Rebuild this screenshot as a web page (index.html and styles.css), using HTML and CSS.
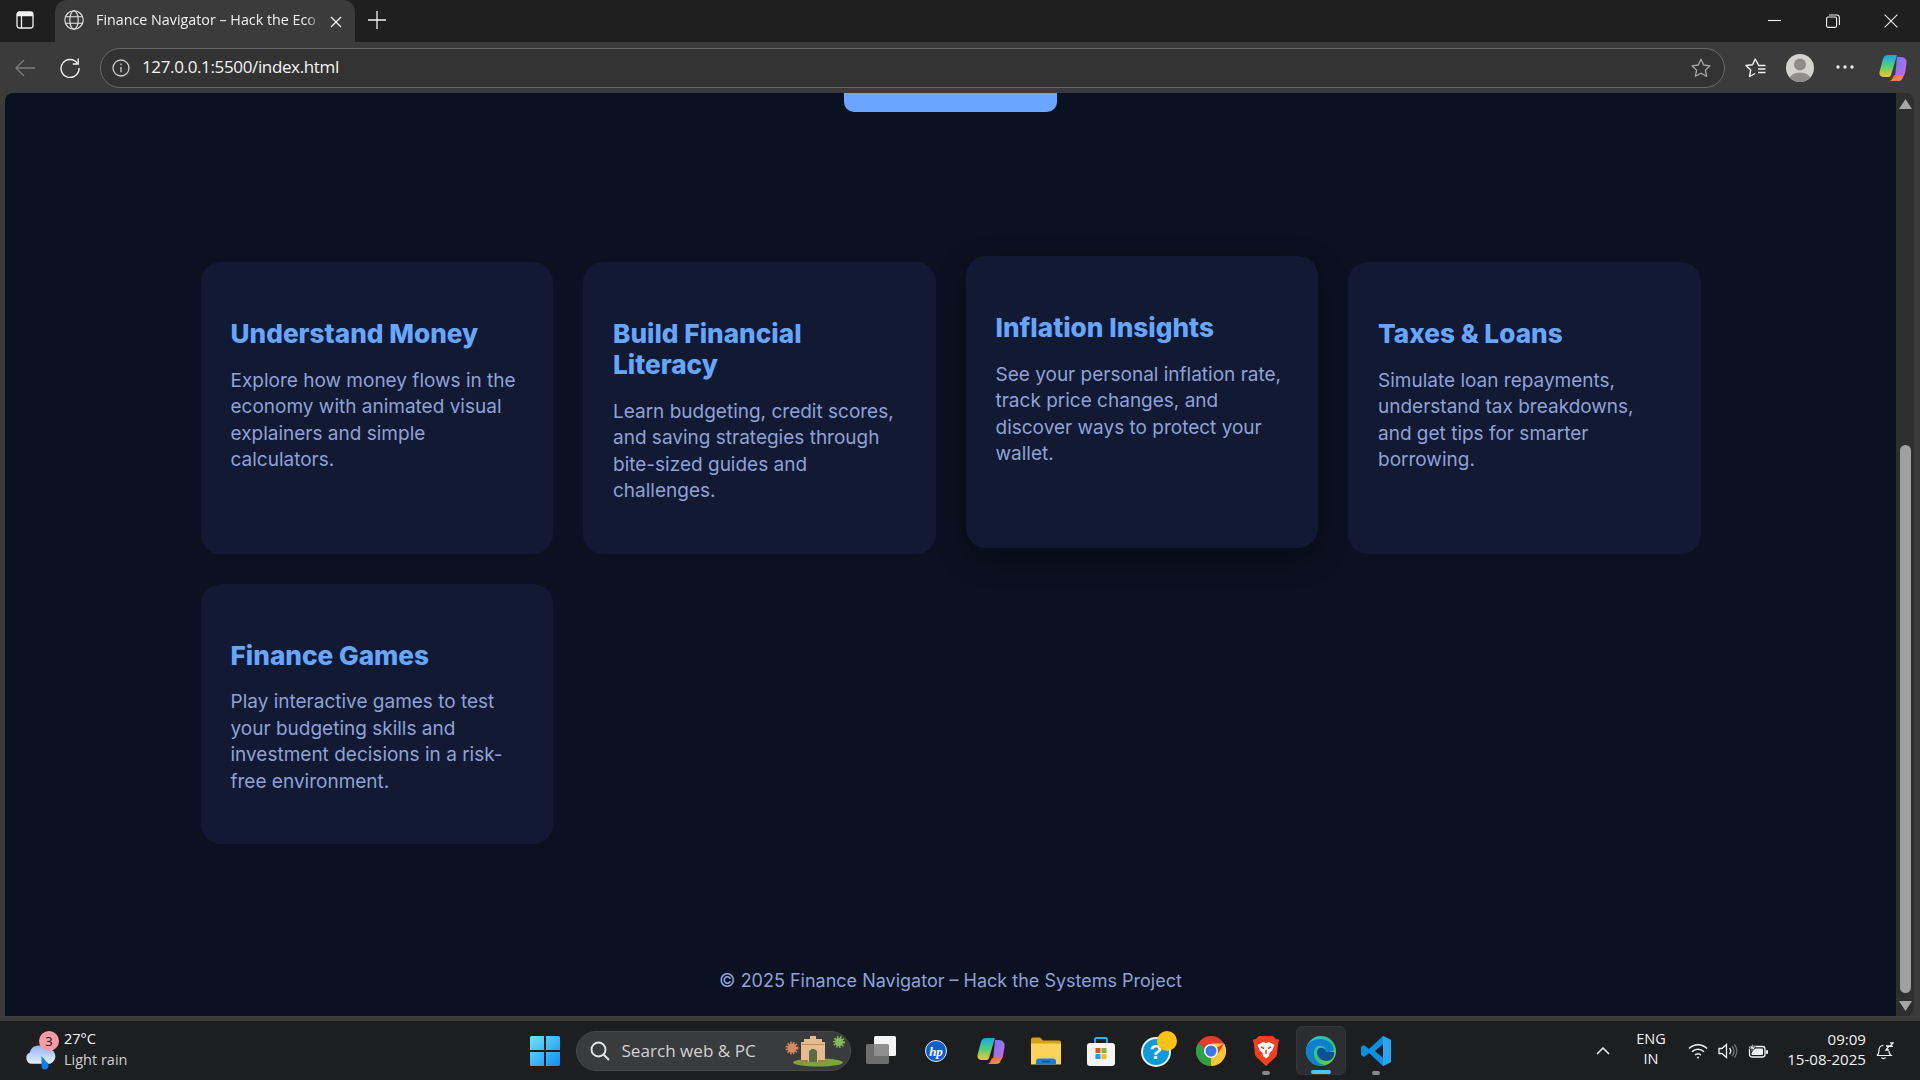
FILE: index.html
```html
<!DOCTYPE html>
<html lang="en">
<head>
<meta charset="utf-8">
<title>Finance Navigator – Hack the Economy</title>
<link rel="stylesheet" href="styles.css">
</head>
<body>
<div class="window">
  <header class="tabbar">
    <svg class="ic-side" viewBox="0 0 18 18" fill="none"><rect x="1" y="1" width="16" height="16" rx="2.5" stroke="#f2f2f2" stroke-width="1.3"/><path d="M1 5.2h16V3a2 2 0 0 0-2-2H3a2 2 0 0 0-2 2z" fill="#f2f2f2"/><path d="M5.5 5v12" stroke="#f2f2f2" stroke-width="1.3"/></svg>
    <div class="tab">
      <svg class="ic-globe" viewBox="0 0 20 20" fill="none" stroke="#e8e8e8" stroke-width="1.1"><circle cx="10" cy="10" r="9.2"/><ellipse cx="10" cy="10" rx="4.2" ry="9.2"/><path d="M1.5 6.7h17M1.5 13.3h17"/></svg>
      <span class="tab-title">Finance Navigator – Hack the Eco</span>
      <svg class="ic-x" viewBox="0 0 12 12" fill="none" stroke="#f2f2f2" stroke-width="1.4"><path d="M1 1l10 10M11 1L1 11"/></svg>
    </div>
    <svg class="ic-plus" viewBox="0 0 18 18" fill="none" stroke="#f2f2f2" stroke-width="1.3"><path d="M9 0v18M0 9h18"/></svg>
    <div class="winctl">
      <svg viewBox="0 0 14 14" fill="none" stroke="#f2f2f2" stroke-width="1.1"><path d="M0 6.5h13"/></svg>
      <svg viewBox="0 0 14 14" fill="none" stroke="#f2f2f2" stroke-width="1.1"><rect x=".6" y="3" width="10" height="10.4" rx="1.6"/><path d="M3 1h8a2.400 2.400 0 0 1 2.400 2.400V11"/></svg>
      <svg viewBox="0 0 14 14" fill="none" stroke="#f2f2f2" stroke-width="1.1"><path d="M.6.6l12.800 12.800M13.400.6L.6 13.400"/></svg>
    </div>
  </header>

  <nav class="toolbar">
    <svg class="ic-back" viewBox="0 0 20 18" fill="none" stroke="#7d7d7d" stroke-width="1.3"><path d="M20 9H1M9 1L1 9l8 8"/></svg>
    <svg class="ic-reload" viewBox="0 0 20 20" fill="none" stroke="#f2f2f2" stroke-width="1.4"><path d="M17.500 5.500A9 9 0 1 0 19 10"/><path d="M18.200 .6v5.400h-5.400"/></svg>
    <div class="address">
      <svg class="ic-info" viewBox="0 0 18 18" fill="none" stroke="#cfcfcf" stroke-width="1.3"><circle cx="9" cy="9" r="8"/><path d="M9 8v5.200M9 4.600v1.600"/></svg>
      <span class="url">127.0.0.1:5500/index.html</span>
      <svg class="ic-star" viewBox="0 0 20 20" fill="none" stroke="#a8a8a8" stroke-width="1.3" stroke-linejoin="round"><path d="M10 1.300l2.700 5.700 6.300.8-4.600 4.300 1.200 6.200L10 15.200l-5.600 3.100 1.200-6.200L1 7.800l6.300-.8z"/></svg>
    </div>
    <svg class="ic-fav" viewBox="0 0 21 20" fill="none" stroke="#f2f2f2" stroke-width="1.4" stroke-linejoin="round"><path d="M13.500 7L10.200 1 7.500 6.700 1 7.500l4.700 4.400-1.200 6.600 5.700-3"/><path d="M13 7.500h7.500M13 11h7.500M13 14.500h7.500"/></svg>
    <svg class="ic-profile" viewBox="0 0 28 28"><defs><clipPath id="pc"><circle cx="14" cy="14" r="14"/></clipPath></defs><circle cx="14" cy="14" r="14" fill="#d4d3cf"/><g clip-path="url(#pc)" fill="#8f8d89"><circle cx="14" cy="10.500" r="6"/><ellipse cx="14" cy="26" rx="11" ry="7.500"/></g></svg>
    <svg class="ic-dots" viewBox="0 0 18 4" fill="#ececec"><circle cx="2" cy="2" r="1.700"/><circle cx="9" cy="2" r="1.700"/><circle cx="16" cy="2" r="1.700"/></svg>
    <svg class="ic-copilot" viewBox="0 0 28 28"><defs><linearGradient id="cpa" x1="0" y1="0" x2="0" y2="1"><stop offset="0" stop-color="#1aa3f0"/><stop offset=".5" stop-color="#4fd07a"/><stop offset="1" stop-color="#f4c430"/></linearGradient><linearGradient id="cpb" x1="0" y1="0" x2="1" y2="1"><stop offset="0" stop-color="#6a7cf0"/><stop offset="1" stop-color="#d266e0"/></linearGradient><linearGradient id="cpc" x1="0" y1="0" x2="1" y2="1"><stop offset="0" stop-color="#f0592e"/><stop offset="1" stop-color="#f79a6a"/></linearGradient></defs><path d="M9 1h9l-6 20c-.5 1.500-1.500 2-3 2H5c-3 0-5-2-4.500-5L4 5C4.700 2.500 6.500 1 9 1z" fill="url(#cpa)"/><path d="M18 3h4c4 0 6 3 5.500 6.500L26 19c-.5 2.500-2 4-4.500 4H16z" fill="url(#cpb)"/><path d="M10 27h9c2.500 0 4-1 4.500-3L25 21H15l-2 4c-.5 1-1.500 2-3 2z" fill="url(#cpc)"/></svg>
  </nav>

  <div class="content-row">
    <main class="page">
      <div class="cta"></div>
      <section class="grid">
        <article class="card">
          <h3>Understand Money</h3>
          <p>Explore how money flows in the economy with animated visual explainers and simple calculators.</p>
        </article>
        <article class="card">
          <h3>Build Financial Literacy</h3>
          <p>Learn budgeting, credit scores, and saving strategies through bite-sized guides and challenges.</p>
        </article>
        <article class="card card-raised">
          <h3>Inflation Insights</h3>
          <p>See your personal inflation rate, track price changes, and discover ways to protect your wallet.</p>
        </article>
        <article class="card">
          <h3>Taxes &amp; Loans</h3>
          <p>Simulate loan repayments, understand tax breakdowns, and get tips for smarter borrowing.</p>
        </article>
        <article class="card">
          <h3>Finance Games</h3>
          <p>Play interactive games to test your budgeting skills and investment decisions in a risk-free environment.</p>
        </article>
      </section>
      <footer class="foot">© 2025 Finance Navigator – Hack the Systems Project</footer>
    </main>
    <aside class="scrollbar">
      <svg class="arrow" viewBox="0 0 13 10" fill="#a6a6a6"><path d="M6.500 0L13 10H0z"/></svg>
      <div class="thumb"></div>
      <svg class="arrow" viewBox="0 0 13 10" fill="#a6a6a6"><path d="M0 0h13L6.500 10z"/></svg>
    </aside>
  </div>

  <footer class="taskbar">
    <div class="weather">
      <div class="weather-icon">
        <svg viewBox="0 0 32 28"><defs><linearGradient id="cl" x1="0" y1="0" x2="0" y2="1"><stop offset="0" stop-color="#8fb4ef"/><stop offset="1" stop-color="#e6efff"/></linearGradient></defs><path d="M7 24a6 6 0 0 1-2-11.500A9 9 0 0 1 21 9a7.500 7.500 0 0 1 5 15z" fill="url(#cl)"/><path d="M17 16l7 8c1 4-1 6-3.500 6S17 28 17 25z" fill="#0f7ff0"/></svg>
        <span class="badge">3</span>
      </div>
      <div class="weather-text"><span class="temp">27°C</span><span class="cond">Light rain</span></div>
    </div>

    <div class="apps">
      <div class="cell">
        <svg class="i30" viewBox="0 0 30 30"><defs><linearGradient id="win" x1="0" y1="0" x2="1" y2="1"><stop offset="0" stop-color="#6fe3fb"/><stop offset="1" stop-color="#0f8cf5"/></linearGradient></defs><path d="M0 1.500A1.500 1.500 0 0 1 1.500 0H14v14H0zM16 0h12.500A1.500 1.500 0 0 1 30 1.500V14H16zM0 16h14v14H1.500A1.500 1.500 0 0 1 0 28.500zM16 16h14v12.500a1.500 1.500 0 0 1-1.500 1.500H16z" fill="url(#win)"/></svg>
      </div>
      <div class="search">
        <svg class="ic-search" viewBox="0 0 20 20" fill="none" stroke="#e4e4e4" stroke-width="1.900"><circle cx="8.500" cy="8.500" r="7"/><path d="M13.500 13.500l5.500 5.500"/></svg>
        <span class="search-text">Search web &amp; PC</span>
        <svg class="ic-gate" viewBox="0 0 60 32"><ellipse cx="33" cy="27.500" rx="25" ry="4" fill="#7aa53a"/><circle cx="7" cy="13" r="4.500" fill="#d98a60" stroke="#d98a60" stroke-width="4" stroke-dasharray="1.200 1.200"/><circle cx="54" cy="7" r="4" fill="#86bb52" stroke="#86bb52" stroke-width="4" stroke-dasharray="1.200 1.200"/><path d="M16 7h3V4h6V1h6v3h6v3h3v20H32v-9c0-5-8-5-8 0v9H16z" fill="#e4bc8f"/><path d="M17 9.500h22" stroke="#b98a5e" stroke-width="1"/><path d="M24 27v-9c0-5 8-5 8 0v9z" fill="#5d6b42"/><path d="M15 27h8v-2h-8zM33 27h8v-2h-8z" fill="#a87a4e"/></svg>
      </div>
      <div class="cell">
        <svg class="i30" viewBox="0 0 30 30"><rect x="8" y="0" width="22" height="20" rx="1.500" fill="#f4f4f4"/><rect x="0" y="8" width="23" height="20" rx="1.500" fill="#7c7c7c" fill-opacity=".85"/></svg>
      </div>
      <div class="cell">
        <svg class="i22" viewBox="0 0 22 22"><circle cx="11" cy="11" r="10.500" fill="#0f5fd0" stroke="#dfe8f8" stroke-width="1"/><text class="hp" x="11" y="15.500" text-anchor="middle">hp</text></svg>
      </div>
      <div class="cell">
        <svg class="i28" viewBox="0 0 28 28"><defs><linearGradient id="cp2a" x1="0" y1="0" x2="0" y2="1"><stop offset="0" stop-color="#1aa3f0"/><stop offset=".5" stop-color="#4fd07a"/><stop offset="1" stop-color="#f4c430"/></linearGradient><linearGradient id="cp2b" x1="0" y1="0" x2="1" y2="1"><stop offset="0" stop-color="#6a7cf0"/><stop offset="1" stop-color="#d266e0"/></linearGradient><linearGradient id="cp2c" x1="0" y1="0" x2="1" y2="1"><stop offset="0" stop-color="#f0592e"/><stop offset="1" stop-color="#f79a6a"/></linearGradient></defs><path d="M9 1h9l-6 20c-.5 1.500-1.500 2-3 2H5c-3 0-5-2-4.500-5L4 5C4.700 2.500 6.500 1 9 1z" fill="url(#cp2a)"/><path d="M18 3h4c4 0 6 3 5.500 6.500L26 19c-.5 2.500-2 4-4.500 4H16z" fill="url(#cp2b)"/><path d="M10 27h9c2.500 0 4-1 4.500-3L25 21H15l-2 4c-.5 1-1.500 2-3 2z" fill="url(#cp2c)"/></svg>
      </div>
      <div class="cell">
        <svg class="i30" viewBox="0 0 30 27"><path d="M0 2a2 2 0 0 1 2-2h7l3 3h16a2 2 0 0 1 2 2v5H0z" fill="#d9a010"/><path d="M0 6h30v21H0z" fill="#fcd35a"/><path d="M5 27v-3c0-2 1-3 3-3h14c2 0 3 1 3 3v3z" fill="#1a7fd4"/><path d="M11 24h8" stroke="#0e4f8f" stroke-width="1.400"/></svg>
      </div>
      <div class="cell">
        <svg class="i30" viewBox="0 0 30 30"><path d="M9 8V3.500c0-1 .7-1.500 1.500-1.500h9c.8 0 1.500.5 1.500 1.500V8" fill="none" stroke="#2fb4ea" stroke-width="1.800"/><rect x="1" y="7" width="28" height="23" rx="3" fill="#f5f5f5"/><rect x="9.500" y="12" width="5" height="5" fill="#e2502a"/><rect x="15.500" y="12" width="5" height="5" fill="#7fb92a"/><rect x="9.500" y="18" width="5" height="5" fill="#1ba0e8"/><rect x="15.500" y="18" width="5" height="5" fill="#fbb818"/></svg>
      </div>
      <div class="cell">
        <div class="help">
          <span class="help-q">?</span>
          <span class="help-dot"></span>
        </div>
      </div>
      <div class="cell">
        <svg class="i30" viewBox="0 0 30 30"><circle cx="15" cy="15" r="15" fill="#e33b2e"/><path d="M15 15L2 7.500A15 15 0 0 0 15 30z" fill="#2f9e44"/><path d="M15 15L28 7.500H15zM28 7.500A15 15 0 0 1 15 30l7.500-13z" fill="#fcc934"/><path d="M15 30l7.500-13H15z" fill="#fcc934"/><circle cx="15" cy="15" r="7" fill="#fff"/><circle cx="15" cy="15" r="5.500" fill="#3b78e7"/></svg>
      </div>
      <div class="cell cell-dot">
        <svg class="i26" viewBox="0 0 26 30"><path d="M6 0h14l3 3 3 .5-1 5-1 10c-.5 2-2 3.500-4 5L13 30l-7-6.500c-2-1.500-3.500-3-4-5L1 8.500 0 3.500 3 3z" fill="#f0401f"/><path d="M4.500 9L10 6l3 1 3-1 5.500 3-2 5-3 3-.5 3-3 2.500L10 20l-.5-3-3-3z" fill="#fff"/><path d="M8 11l3 1.500M18 11l-3 1.500M13 14v4" stroke="#f0401f" stroke-width="1.500" fill="none"/></svg>
      </div>
      <div class="cell-edge">
        <svg class="i30" viewBox="0 0 30 30"><defs><linearGradient id="eg" x1="0" y1="0" x2="1" y2="1"><stop offset="0" stop-color="#2fc2e0"/><stop offset=".6" stop-color="#35c46a"/><stop offset="1" stop-color="#8ad84e"/></linearGradient></defs><circle cx="15" cy="15" r="15" fill="url(#eg)"/><path d="M0 15C0 7 7 3 14 3c7 0 12 4 14 10-1 3-5 4-9 3 1-2 1-5-3-6-6-1-9 4-8 9 1 6 6 10 12 10A15 15 0 0 1 0 15z" fill="#0f7fd0"/><path d="M11 16c0-5 8-6 9 0h8c1 5-3 9-7 9-6 0-10-4-10-9z" fill="#0b4f96"/></svg>
      </div>
      <div class="cell cell-dot">
        <svg class="i30" viewBox="0 0 30 30"><path d="M22 0l8 4v22l-8 4L8 17l-5 4-3-2v-8l3-2 5 4zM22 8l-8 7 8 7z" fill="#0d8fe0"/><path d="M22 0l8 4v22l-8 4z" fill="#27a7ee"/></svg>
      </div>
    </div>

    <div class="tray">
      <svg class="ic-chev" viewBox="0 0 14 8" fill="none" stroke="#f2f2f2" stroke-width="1.500"><path d="M1 7l6-6 6 6"/></svg>
      <div class="lang"><span>ENG</span><span>IN</span></div>
      <svg class="ic-wifi" viewBox="0 0 20 16" fill="none" stroke="#f2f2f2" stroke-width="1.500"><path d="M1 5.500c5-5 13-5 18 0M4 8.800c3.500-3.300 8.500-3.300 12 0M7 12c1.700-1.500 4.300-1.500 6 0"/><circle cx="10" cy="14.500" r="1" fill="#f2f2f2" stroke="none"/></svg>
      <svg class="ic-vol" viewBox="0 0 20 16" fill="none" stroke-width="1.300"><path d="M1 5.500h3L8.500 1.500v13L4 10.500H1z" stroke="#f2f2f2"/><path d="M11.500 5c1.500 1.800 1.500 4.200 0 6" stroke="#f2f2f2"/><path d="M14 3c2.500 3 2.500 7 0 10M16.500 1.500c3 4 3 9 0 13" stroke="#707070"/></svg>
      <svg class="ic-batt" viewBox="0 0 20 16" fill="none"><rect x="1.500" y="3.500" width="15.500" height="10.500" rx="2.500" stroke="#f2f2f2" stroke-width="1.300"/><rect x="3.500" y="5.500" width="11.500" height="6.500" rx="1" fill="#f2f2f2"/><rect x="18" y="7" width="2" height="4" rx="1" fill="#f2f2f2"/><path d="M5 0L1.500 6h3L3 10l5-6H5z" fill="#f2f2f2" stroke="#1c1e20" stroke-width=".8"/></svg>
      <div class="clock"><span>09:09</span><span>15-08-2025</span></div>
      <svg class="ic-bell" viewBox="0 0 18 18" fill="none" stroke="#f2f2f2" stroke-width="1.200"><path d="M1 13.500c1.500-1 2-2.500 2-5 0-3 1.700-5 4.500-5M13 9c0 2 .5 3.500 2 4.500H1M5.500 15.500c.7 1.500 3.300 1.500 4 0"/><path d="M10 4h3l-3 4h3M14 .8h3l-3 3.500h3" stroke-width="1.300"/></svg>
    </div>
  </footer>
</div>
</body>
</html>
```

FILE: styles.css
```css
* { box-sizing: border-box; }
html, body { margin: 0; height: 100%; overflow: hidden; }
body { font-family: "Open Sans", "Noto Sans", sans-serif; background: #3b3b3b; color: #fff; }
svg { display: block; flex: none; }

.window { display: flex; flex-direction: column; height: 1080px; }

/* Browser tab strip */
.tabbar { display: flex; align-items: center; height: 42px; flex: none; background: #1f1f1f; padding-left: 16px; }
.ic-side { width: 18px; height: 18px; margin-top: -2px; }
.tab { display: flex; align-items: center; width: 300px; height: 42px; margin-left: 21px; padding-left: 9px; background: #3b3b3b; border-radius: 12px 12px 0 0; }
.ic-globe { width: 20px; height: 20px; margin-top: -2px; }
.tab-title { width: 224px; margin-left: 12px; margin-top: -3px; font-size: 14.300px; white-space: nowrap; color: #f0f0f0; -webkit-mask-image: linear-gradient(90deg, #000 94%, transparent); mask-image: linear-gradient(90deg, #000 94%, transparent); }
.ic-x { width: 12px; height: 12px; margin-left: 10px; margin-top: 1px; }
.ic-plus { width: 18px; height: 18px; margin-left: 13px; margin-top: -2px; }
.winctl { display: flex; margin-left: auto; margin-right: 22px; gap: 44px; margin-top: -1px; }
.winctl svg { width: 14px; height: 14px; }

/* Browser toolbar */
.toolbar { display: flex; align-items: center; height: 51px; flex: none; padding: 0 13px 0 15px; background: #3b3b3b; }
.ic-back { width: 20px; height: 18px; margin-top: 1px; }
.ic-reload { width: 20px; height: 20px; margin-left: 25px; margin-top: 1px; }
.address { display: flex; align-items: center; width: 1625px; height: 40px; margin-left: 20px; padding: 0 13px 0 11px; border: 1px solid #6a6a6a; border-radius: 20px; background: #333333; }
.ic-info { width: 18px; height: 18px; }
.url { margin-left: 12px; margin-top: -2px; font-size: 17px; letter-spacing: -.36px; color: #f4f4f4; }
.ic-star { width: 20px; height: 20px; margin-left: auto; }
.ic-fav { width: 21px; height: 20px; margin-left: 20px; }
.ic-profile { width: 28px; height: 28px; margin-left: 20px; }
.ic-dots { width: 18px; height: 4px; margin-left: 22px; margin-top: -2px; }
.ic-copilot { width: 28px; height: 28px; margin-left: 25px; }

/* Page viewport */
.content-row { display: flex; flex: 1; min-height: 0; margin: 0 6px 5px 5px; }
.page { display: flex; flex-direction: column; flex: 1; min-width: 0; background: #0a1120; border-radius: 8px 0 0 0; font-family: Inter, sans-serif; }
.cta { width: 213px; height: 19px; flex: none; margin: 0 auto; background: #6aa6ff; border-radius: 0 0 10px 10px; }

.grid { display: grid; grid-template-columns: repeat(4, 1fr); gap: 30px; width: 1500px; margin: 150px auto 0; }
.card { padding: 30px; background: #121932; border-radius: 20px; }
.card-raised { transform: translateY(-6px); box-shadow: 0 10px 30px rgba(0, 0, 0, .3); }
.card h3 { margin: 26px 0 18.500px; font-size: 26.200px; line-height: 31px; font-weight: 800; color: #66a6ff; }
.card p { margin: 0 0 19.100px; font-size: 19px; line-height: 26.500px; color: #8ea2d8; }

.foot { margin-top: auto; padding-bottom: 22px; text-align: center; font-size: 18px; line-height: 26px; color: #8ea2d8; }

/* Scrollbar */
.scrollbar { display: flex; flex-direction: column; align-items: center; width: 18px; flex: none; padding: 6px 0 5px; background: #2f2f2f; border-radius: 0 8px 8px 0; }
.arrow { width: 13px; height: 10px; }
.thumb { width: 11px; height: 548px; margin-top: auto; margin-bottom: 8px; background: #a0a0a0; border-radius: 6px; }

/* Windows taskbar */
.taskbar { position: relative; display: flex; align-items: center; height: 59px; flex: none; background: #1c1e20; }
.weather { display: flex; align-items: center; width: 517px; padding-left: 25px; }
.weather-icon { position: relative; width: 31px; height: 28px; margin-top: 6px; }
.weather-icon svg { width: 31px; height: 28px; overflow: visible; }
.badge { position: absolute; top: -9px; left: 14px; width: 20px; height: 20px; border-radius: 50%; background: #ff9aa2; color: #111; font-size: 13px; line-height: 20px; text-align: center; }
.weather-text { display: flex; flex-direction: column; margin-left: 8px; font-size: 14.500px; line-height: 21px; margin-top: -4px; }
.temp { color: #f6f6f6; }
.cond { color: #cfcfcf; }

.apps { display: flex; align-items: center; }
.cell { position: relative; display: flex; align-items: center; justify-content: center; width: 55px; height: 49px; flex: none; }
.cell-dot::after { content: ""; position: absolute; bottom: 0; left: 50%; width: 8px; height: 4px; margin-left: -4px; border-radius: 2px; background: #8a8a8a; }
.cell-edge { position: relative; display: flex; align-items: center; justify-content: center; width: 50px; height: 49px; flex: none; margin: 0 2.500px; background: #2b2d30; border: 1px solid #34363a; border-radius: 6px; }
.cell-edge::after { content: ""; position: absolute; bottom: 0; left: 50%; width: 20px; height: 4px; margin-left: -10px; border-radius: 2px; background: #4cc2ff; }
.i30 { width: 30px; height: 30px; }
.i28 { width: 28px; height: 28px; }
.i26 { width: 26px; height: 30px; }
.i22 { width: 22px; height: 22px; }
.hp { font-family: "Liberation Serif", serif; font-style: italic; font-weight: 700; font-size: 13px; fill: #fff; }
.search { display: flex; align-items: center; width: 275px; height: 40px; margin-left: 3.500px; margin-right: 3px; padding-left: 13px; flex: none; background: #3a3b3d; border: 1px solid #47484a; border-radius: 20px; }
.ic-search { width: 20px; height: 20px; }
.search-text { margin-left: 12px; font-size: 17.100px; color: #d2d2d2; white-space: nowrap; }
.ic-gate { width: 60px; height: 32px; margin-left: auto; margin-right: 5px; }
.help { position: relative; width: 30px; height: 30px; margin-top: 3px; border-radius: 50%; background: #0d9ad8; border: 2px solid #e6f2f8; text-align: center; }
.help-q { font: 700 21px/26px "Liberation Sans", sans-serif; color: #fff; }
.help-dot { position: absolute; top: -8px; right: -8px; width: 20px; height: 20px; border-radius: 50%; background: #ffc20e; }

.tray { display: flex; align-items: center; margin-left: auto; padding-right: 26px; font-size: 14px; color: #f2f2f2; }
.ic-chev { width: 14px; height: 8px; }
.lang { display: flex; flex-direction: column; align-items: center; width: 38px; margin: -3px 0 0 22px; font-size: 14.500px; line-height: 20px; }
.ic-wifi { width: 20px; height: 16px; margin-left: 18px; }
.ic-vol { width: 20px; height: 16px; margin-left: 10px; }
.ic-batt { width: 20px; height: 16px; margin-left: 10px; }
.clock { display: flex; flex-direction: column; align-items: flex-end; width: 98px; margin-top: -3px; font-size: 15.100px; line-height: 20px; }
.ic-bell { width: 18px; height: 18px; margin-left: 10px; }
```
